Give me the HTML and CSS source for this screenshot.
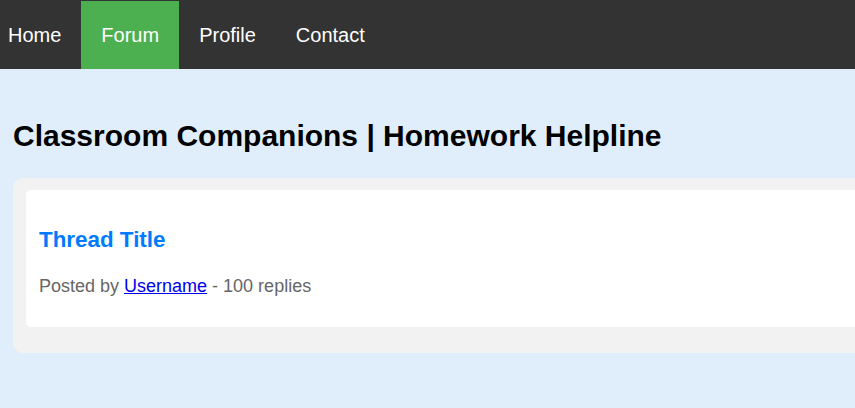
FILE: index.html
```html
<!DOCTYPE html>
<html lang="en">
<head>
<meta charset="utf-8">
<title>Classroom Companions | Homework Helpline</title>
<link rel="stylesheet" href="styles.css">
</head>
<body>
<nav class="topnav">
  <a class="nav-link nav-first" href="#">Home</a>
  <a class="nav-link active" href="#">Forum</a>
  <a class="nav-link" href="#">Profile</a>
  <a class="nav-link" href="#">Contact</a>
</nav>
<main class="main">
  <h1 class="page-title">Classroom Companions | Homework Helpline</h1>
  <section class="thread-list">
    <article class="thread">
      <h2 class="thread-title">Thread Title</h2>
      <p class="thread-meta">Posted by <a href="#" class="user-link">Username</a> - 100 replies</p>
    </article>
  </section>
</main>
</body>
</html>
```

FILE: styles.css
```css
html, body {
  margin: 0;
  padding: 0;
  overflow: hidden;
}
body {
  background: #e0edfa;
  font-family: "Liberation Sans", Arial, sans-serif;
  height: 408px;
}
.topnav {
  display: flex;
  background: #333333;
  padding-top: 1px;
  height: 68px;
}
.nav-link {
  display: block;
  color: #ffffff;
  text-decoration: none;
  font-size: 20px;
  line-height: 23px;
  padding: 22.5px 20px;
}
.nav-first {
  padding-left: 8px;
}
.nav-link.active {
  background: #4caf50;
}
.main {
  padding: 0 0 0 13px;
}
.page-title {
  font-size: 30px;
  line-height: 34.5px;
  margin: 50px 0 24px 0;
  color: #000;
}
.thread-list {
  background: #f2f2f2;
  border-radius: 10px;
  padding: 12px 13px 13px 13px;
  width: 900px;
}
.thread {
  background: #ffffff;
  border-radius: 5px;
  padding: 13px;
  margin-bottom: 13px;
}
.thread-title {
  color: #007bff;
  font-size: 22.4px;
  line-height: 25.8px;
  margin: 24.4px 0 23.8px 0;
}
.thread-meta {
  color: #666666;
  font-size: 18px;
  line-height: 20.7px;
  margin: 0 0 17px 0;
}
.user-link {
  color: #0000ee;
}
```
